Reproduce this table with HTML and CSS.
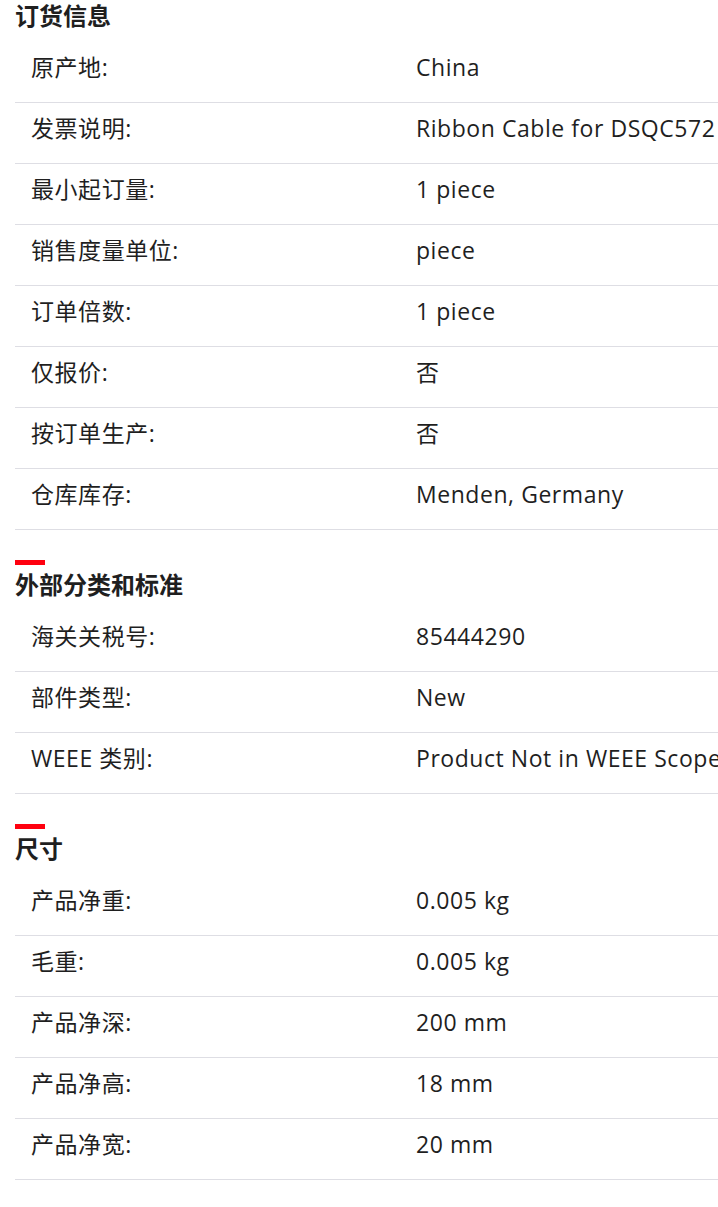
FILE: index.html
```html
<!DOCTYPE html>
<html lang="zh-CN">
<head>
<meta charset="utf-8">
<title>产品信息</title>
<link rel="stylesheet" href="styles.css">
</head>
<body>
<main class="page">
  <section class="spec">
    <div class="spec-bar"></div>
    <h2 class="spec-title">订货信息</h2>
    <div class="spec-row"><div class="spec-label">原产地:</div><div class="spec-value">China</div></div>
    <div class="spec-row"><div class="spec-label">发票说明:</div><div class="spec-value">Ribbon Cable for DSQC572</div></div>
    <div class="spec-row"><div class="spec-label">最小起订量:</div><div class="spec-value">1 piece</div></div>
    <div class="spec-row"><div class="spec-label">销售度量单位:</div><div class="spec-value">piece</div></div>
    <div class="spec-row"><div class="spec-label">订单倍数:</div><div class="spec-value">1 piece</div></div>
    <div class="spec-row"><div class="spec-label">仅报价:</div><div class="spec-value">否</div></div>
    <div class="spec-row"><div class="spec-label">按订单生产:</div><div class="spec-value">否</div></div>
    <div class="spec-row"><div class="spec-label">仓库库存:</div><div class="spec-value">Menden, Germany</div></div>
  </section>
  <section class="spec">
    <div class="spec-bar"></div>
    <h2 class="spec-title">外部分类和标准</h2>
    <div class="spec-row"><div class="spec-label">海关关税号:</div><div class="spec-value">85444290</div></div>
    <div class="spec-row"><div class="spec-label">部件类型:</div><div class="spec-value">New</div></div>
    <div class="spec-row"><div class="spec-label">WEEE 类别:</div><div class="spec-value">Product Not in WEEE Scope</div></div>
  </section>
  <section class="spec">
    <div class="spec-bar"></div>
    <h2 class="spec-title">尺寸</h2>
    <div class="spec-row"><div class="spec-label">产品净重:</div><div class="spec-value">0.005 kg</div></div>
    <div class="spec-row"><div class="spec-label">毛重:</div><div class="spec-value">0.005 kg</div></div>
    <div class="spec-row"><div class="spec-label">产品净深:</div><div class="spec-value">200 mm</div></div>
    <div class="spec-row"><div class="spec-label">产品净高:</div><div class="spec-value">18 mm</div></div>
    <div class="spec-row"><div class="spec-label">产品净宽:</div><div class="spec-value">20 mm</div></div>
  </section>
</main>
</body>
</html>
```
FILE: styles.css
```css
html, body {
  margin: 0;
  padding: 0;
  background: #ffffff;
  overflow: hidden;
}

body {
  font-family: "Open Sans", "Noto Sans CJK SC", sans-serif;
  color: #1f1f1f;
}

.page {
  margin-top: -9px;
  padding-left: 15px;
  width: 770px;
}

.spec {
  margin-top: 30px;
}

.spec:first-child {
  margin-top: 0;
}

.spec-bar {
  width: 30px;
  height: 5px;
  background: #ff000f;
}

.spec-title {
  margin: 5px 0 11px;
  font-size: 24px;
  line-height: 30px;
  font-weight: 700;
  color: #1f1f1f;
}

.spec-row {
  display: grid;
  grid-template-columns: 1fr 1fr;
  align-items: start;
  height: 50px;
  padding-top: 10px;
  border-bottom: 1px solid #dedee4;
  font-size: 23px;
  line-height: 30px;
  letter-spacing: 0.55px;
}

.spec-label,
.spec-value {
  padding-left: 16px;
  white-space: nowrap;
}
```
